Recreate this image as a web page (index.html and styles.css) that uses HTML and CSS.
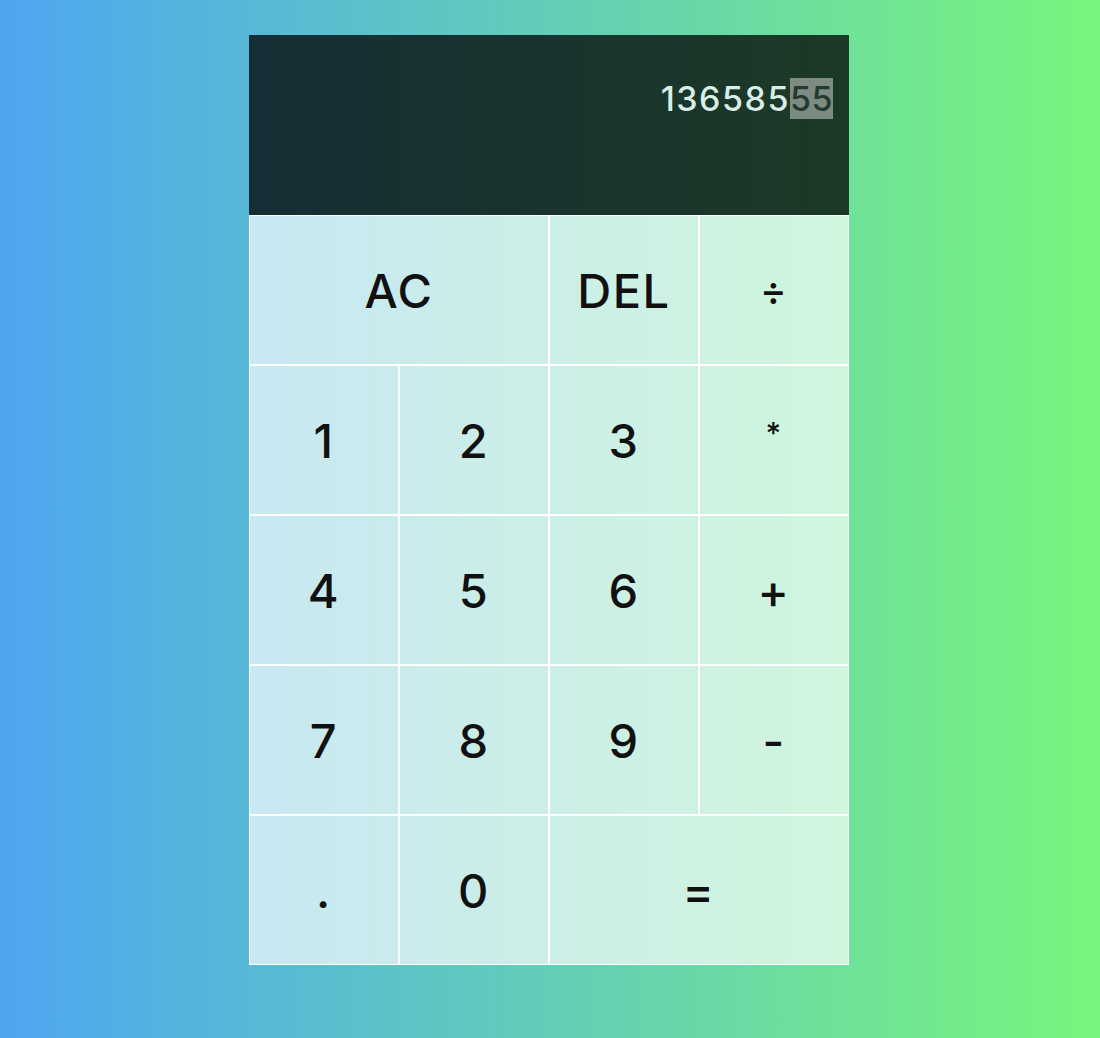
FILE: index.html
```html
<!DOCTYPE html>
<html>
<head>
<meta charset="utf-8">
<link rel="stylesheet" href="styles.css">
</head>
<body>
<div class="calculator">
  <div class="output">
    <div class="current">136585<span class="sel">55</span></div>
  </div>
  <button class="span-two">AC</button>
  <button>DEL</button>
  <button class="op-div">÷</button>
  <button>1</button>
  <button>2</button>
  <button>3</button>
  <button class="op-mul">*</button>
  <button>4</button>
  <button>5</button>
  <button>6</button>
  <button>+</button>
  <button>7</button>
  <button>8</button>
  <button>9</button>
  <button>-</button>
  <button>.</button>
  <button>0</button>
  <button class="span-two">=</button>
</div>
</body>
</html>
```
FILE: styles.css
```css
* { box-sizing: border-box; }
html, body { margin: 0; padding: 0; }
body {
  width: 1100px;
  height: 1038px;
  overflow: hidden;
  background: linear-gradient(to right, #4fa6f1, #78f57d);
  font-family: "Inter", "Liberation Sans", sans-serif;
}
.calculator {
  display: grid;
  justify-content: center;
  grid-template-columns: repeat(4, 150px);
  grid-template-rows: 180px repeat(5, 150px);
  padding-top: 35px;
  padding-right: 2px;
}
.calculator button {
  font-family: inherit;
  font-size: 47px;
  font-weight: 500;
  letter-spacing: 1.5px;
  color: #111;
  border: 1px solid #fff;
  outline: none;
  background: rgba(255, 255, 255, 0.67);
  cursor: pointer;
  padding: 0;
}
.calculator .op-mul { font-size: 30px; padding-bottom: 14px; }
.calculator .op-div { font-size: 40px; }
.span-two { grid-column: span 2; }
.output {
  grid-column: 1 / -1;
  background: rgba(0, 0, 0, 0.75);
  display: flex;
  justify-content: flex-end;
  align-items: flex-start;
  padding: 46px 16px 0 0;
}
.current {
  color: #d8eee6;
  font-size: 34px;
  font-weight: 500;
  line-height: 36px;
  letter-spacing: 1.5px;
}
.sel {
  background: #7c8c82;
  color: #243a2e;
  letter-spacing: 0.5px;
}
```
